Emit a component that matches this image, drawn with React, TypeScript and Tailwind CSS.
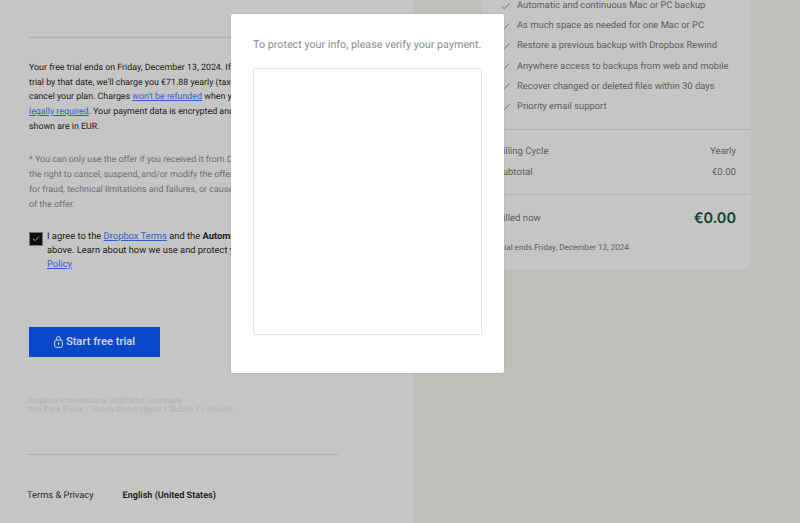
import { Check } from "lucide-react";

const features = [
  "Automatic and continuous Mac or PC backup",
  "As much space as needed for one Mac or PC",
  "Restore a previous backup with Dropbox Rewind",
  "Anywhere access to backups from web and mobile",
  "Recover changed or deleted files within 30 days",
  "Priority email support",
];

export default function App() {
  return (
    <div className="relative flex h-[523px] w-[800px] overflow-hidden bg-[#bfbebb] font-['Roboto','Liberation_Sans',sans-serif] [text-rendering:geometricPrecision]">
      <main className="h-full w-[413px] shrink-0 bg-[#c5c5c5] pl-[29px]">
        <div className="mt-[37px] h-px w-[309px] bg-[#aeaeae]" />
        <p className="mt-[23px] whitespace-nowrap text-[8.85px] leading-[14.67px] text-[#1e1919]">
          Your free trial ends on Friday, December 13, 2024. If you don't cancel your free
          <br />
          trial by that date, we'll charge you €71.88 yearly (taxes may apply) until you
          <br />
          cancel your plan. Charges <a className="text-[#2f5ed0] underline">won't be refunded</a> when you cancel unless
          <br />
          <a className="text-[#2f5ed0] underline">legally required</a>. Your payment data is encrypted and secure. All amounts
          <br />
          shown are in EUR.
        </p>
        <p className="mt-[19px] whitespace-nowrap text-[8.9px] leading-[14.87px] text-[#6c6f76]">
          * You can only use the offer if you received it from Dropbox. We reserve
          <br />
          the right to cancel, suspend, and/or modify the offer at any time, including
          <br />
          for fraud, technical limitations and failures, or causes beyond our control
          <br />
          of the offer.
        </p>
        <div className="mt-[17px] flex gap-[5px]">
          <div className="ml-px mt-[3px] flex h-[12px] w-[12px] shrink-0 items-center justify-center bg-[#0f0d0d] outline outline-1 outline-[#777]">
            <Check size={8} strokeWidth={2} className="text-white" />
          </div>
          <p className="whitespace-nowrap text-[9.35px] leading-[14px] text-[#1e1919]">
            I agree to the <a className="text-[#2f5ed0] underline">Dropbox Terms</a> and the <b>Automatic Renewal Terms</b>
            <br />
            above. Learn about how we use and protect your data in our Privacy
            <br />
            <a className="text-[#2f5ed0] underline">Policy</a>
          </p>
        </div>
        <button className="mt-[55px] flex h-[30px] w-[131px] items-center justify-center gap-[3px] bg-[#0a48ca] pt-px text-[11.2px] font-medium text-[#d5dae6]">
          <svg width="9" height="12" viewBox="0 0 9 12" fill="none" stroke="currentColor" strokeWidth="1">
            <path d="M2.5 4V2.6a2 2 0 0 1 4 0V4" />
            <rect x="0.7" y="4" width="7.6" height="7.3" rx="1.6" />
            <circle cx="4.5" cy="7.4" r="0.8" fill="currentColor" stroke="none" />
            <path d="M4.5 7.6V9.2" />
          </svg>
          Start free trial
        </button>
        <p className="-ml-[2px] mt-[40px] whitespace-nowrap text-[8.4px] leading-[9.5px] text-[#b0b0b0]">
          Dropbox International Unlimited Company
          <br />
          One Park Place / Hatch Street Upper / Dublin 2 / Ireland
        </p>
        <div className="-ml-[2px] mt-[38px] h-px w-[311px] bg-[#aeaeae]" />
        <div className="-ml-[2px] mt-[35px] flex items-center gap-[29px] text-[9.3px] leading-[12px]">
          <span className="text-[#2b2828]">Terms &amp; Privacy</span>
          <span className="text-[9.1px] font-semibold text-[#1e1919]">English (United States)</span>
        </div>
      </main>

      <aside className="ml-[69px] h-[269px] w-[269px] shrink-0 rounded-b-lg bg-[#c5c5c5] text-[#5f5d5b]">
        <ul className="-mt-[4px] pl-[18px]">
          {features.map((f) => (
            <li key={f} className="flex h-[20.2px] items-center gap-[6px] text-[9.4px]">
              <Check size={11} strokeWidth={1.5} className="shrink-0 text-[#4a4847]" />
              {f}
            </li>
          ))}
        </ul>
        <div className="mt-[12px] border-t border-[#b0b0b0] px-[15px] pb-[10px] pt-[11px] text-[9.6px]">
          <div className="flex h-[21.5px] items-center justify-between">
            <span>Billing Cycle</span>
            <span>Yearly</span>
          </div>
          <div className="flex h-[21.5px] items-center justify-between">
            <span>Subtotal</span>
            <span>€0.00</span>
          </div>
          <div className="-mx-[15px] mt-[10px] border-t border-[#b4b4b4] px-[15px] pt-[13px]">
            <div className="flex h-[22px] items-center justify-between">
              <span>Billed now</span>
              <span className="font-['Inter'] text-[14.5px] font-semibold text-[#0e4433]">€0.00</span>
            </div>
            <p className="mt-[11px] text-[8.1px] text-[#5f5d5b]">Trial ends Friday, December 13, 2024</p>
          </div>
        </div>
      </aside>

      <div className="absolute left-[231px] top-[14px] flex h-[359px] w-[273px] flex-col rounded-[2px] bg-white px-[22px] pt-[23px] shadow-[0_0_2px_rgba(0,0,0,0.15)]">
        <p className="whitespace-nowrap text-[10.75px] leading-[16px] text-[#8a8c93]">To protect your info, please verify your payment.</p>
        <div className="mt-[15px] h-[267px] w-[229px] rounded-[2px] border border-[#e3e3e3] bg-white" />
      </div>
    </div>
  );
}
